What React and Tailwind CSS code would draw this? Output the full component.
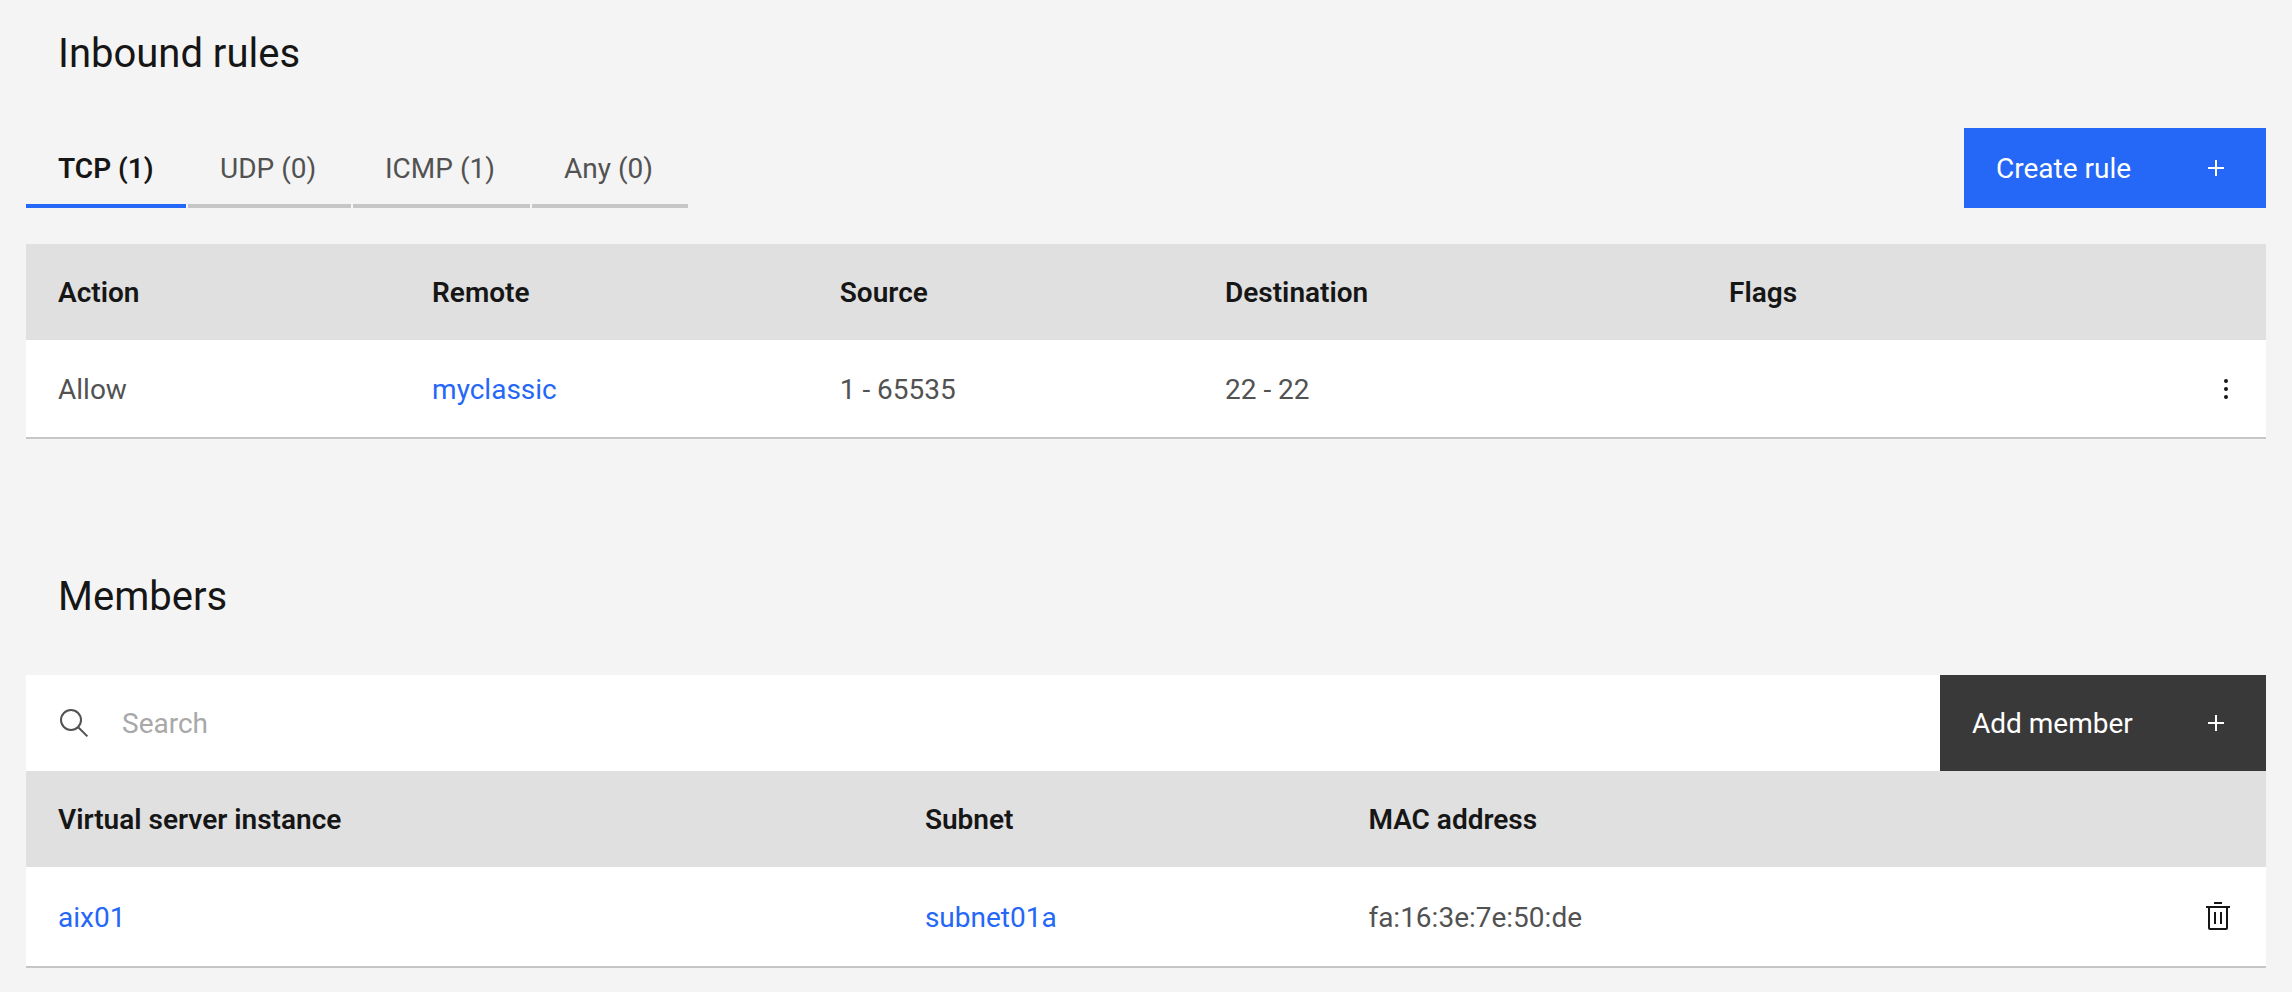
import React, { useState } from "react";

const tabs = [
  { id: "tcp", label: "TCP (1)", width: "w-[160px]" },
  { id: "udp", label: "UDP (0)", width: "w-[163px]" },
  { id: "icmp", label: "ICMP (1)", width: "w-[177px]" },
  { id: "any", label: "Any (0)", width: "w-[156px]" },
];

const rules = [
  { action: "Allow", remote: "myclassic", source: "1 - 65535", destination: "22 - 22", flags: "" },
];

const members = [
  { instance: "aix01", subnet: "subnet01a", mac: "fa:16:3e:7e:50:de" },
];

function AddIcon() {
  return (
    <svg className="size-8 shrink-0" viewBox="0 0 32 32" fill="currentColor" aria-hidden="true">
      <path d="M17 15V8h-2v7H8v2h7v7h2v-7h7v-2z" />
    </svg>
  );
}

function SearchIcon() {
  return (
    <svg className="size-8 shrink-0 text-[#525252]" viewBox="0 0 32 32" fill="none" stroke="currentColor" strokeWidth="2" aria-hidden="true">
      <circle cx="13" cy="13" r="10" />
      <path d="M20.2 20.2l9.2 9.2" />
    </svg>
  );
}

function OverflowIcon() {
  return (
    <svg className="size-8" viewBox="0 0 32 32" fill="currentColor" aria-hidden="true">
      <circle cx="16" cy="8" r="2" />
      <circle cx="16" cy="16" r="2" />
      <circle cx="16" cy="24" r="2" />
    </svg>
  );
}

function TrashIcon() {
  return (
    <svg className="size-8" viewBox="0 0 32 32" fill="currentColor" aria-hidden="true">
      <path d="M12 12h2v12h-2zM18 12h2v12h-2z" />
      <path d="M4 6v2h2v20a2 2 0 0 0 2 2h16a2 2 0 0 0 2-2V8h2V6zM8 28V8h16v20z" />
      <path d="M12 2h8v2h-8z" />
    </svg>
  );
}

function Th({ children, className = "" }) {
  return (
    <th scope="col" className={`px-8 pt-0.5 text-left font-semibold text-[#161616] ${className}`}>
      {children}
    </th>
  );
}

function Td({ children }) {
  return <td className="px-8 pt-0.5">{children}</td>;
}

function TextLink({ children }) {
  return (
    <a href="#" className="text-[#2567f6] hover:underline">
      {children}
    </a>
  );
}

export default function App() {
  const [activeTab, setActiveTab] = useState("tcp");
  const [query, setQuery] = useState("");

  return (
    <main className="min-h-screen bg-[#f4f4f4] px-[26px] pt-7 pb-[26px] font-['Roboto',sans-serif] text-[28px] leading-9 text-[#525252]">
      {/* Inbound rules */}
      <section>
        <h2 className="px-8 text-[40px] leading-[52px] text-[#161616]">Inbound rules</h2>

        <div className="mt-12 flex items-end justify-between">
          <div role="tablist" className="flex gap-[2px]">
            {tabs.map((tab) => (
              <button
                key={tab.id}
                role="tab"
                type="button"
                aria-selected={activeTab === tab.id}
                onClick={() => setActiveTab(tab.id)}
                className={`h-20 whitespace-nowrap border-b-4 pl-8 pt-1.5 text-left ${tab.width} ${
                  activeTab === tab.id
                    ? "border-[#2567f6] font-semibold text-[#161616]"
                    : "border-[#c6c6c6] text-[#525252]"
                }`}
              >
                {tab.label}
              </button>
            ))}
          </div>
          <button type="button" className="flex h-20 w-[302px] items-center justify-between bg-[#2567f6] pl-8 pr-[34px] text-white">
            <span className="pt-0.5">Create rule</span>
            <AddIcon />
          </button>
        </div>

        <table className="mt-9 w-full table-fixed">
          <thead>
            <tr className="h-24 bg-[#e0e0e0]">
              <Th className="w-[16.7%]">Action</Th>
              <Th className="w-[18.2%]">Remote</Th>
              <Th className="w-[17.2%]">Source</Th>
              <Th className="w-[22.5%]">Destination</Th>
              <Th>Flags</Th>
              <td className="w-20"></td>
            </tr>
          </thead>
          <tbody>
            {rules.map((rule) => (
              <tr key={rule.remote} className="h-[98px] border-b-2 border-[#c6c6c6] bg-white">
                <Td>{rule.action}</Td>
                <Td><TextLink>{rule.remote}</TextLink></Td>
                <Td>{rule.source}</Td>
                <Td>{rule.destination}</Td>
                <Td>{rule.flags}</Td>
                <td>
                  <button type="button" aria-label="Rule options" className="flex size-20 items-center justify-center text-[#161616]">
                    <OverflowIcon />
                  </button>
                </td>
              </tr>
            ))}
          </tbody>
        </table>
      </section>

      {/* Members */}
      <section className="mt-[132px]">
        <h2 className="px-8 text-[40px] leading-[52px] text-[#161616]">Members</h2>

        <div className="mt-[52px] flex h-24 bg-white">
          <label className="flex flex-1 items-center gap-8 pl-8">
            <SearchIcon />
            <input
              type="text"
              aria-label="Search members"
              placeholder="Search"
              value={query}
              onChange={(e) => setQuery(e.target.value)}
              className="h-full flex-1 bg-transparent placeholder-[#a8a8a8] focus:outline-none"
            />
          </label>
          <button type="button" className="flex w-[326px] items-center justify-between bg-[#393939] pl-8 pr-[34px] text-white">
            <span className="pt-0.5">Add member</span>
            <AddIcon />
          </button>
        </div>

        <table className="w-full table-fixed">
          <thead>
            <tr className="h-24 bg-[#e0e0e0]">
              <Th className="w-[38.7%]">Virtual server instance</Th>
              <Th className="w-[19.8%]">Subnet</Th>
              <Th>MAC address</Th>
              <td className="w-24"></td>
            </tr>
          </thead>
          <tbody>
            {members.map((member) => (
              <tr key={member.mac} className="h-[100px] border-b-2 border-[#c6c6c6] bg-white">
                <Td><TextLink>{member.instance}</TextLink></Td>
                <Td><TextLink>{member.subnet}</TextLink></Td>
                <Td>{member.mac}</Td>
                <td>
                  <button type="button" aria-label="Remove member" className="flex size-24 items-center justify-center pb-0.5 text-[#161616]">
                    <TrashIcon />
                  </button>
                </td>
              </tr>
            ))}
          </tbody>
        </table>
      </section>
    </main>
  );
}
